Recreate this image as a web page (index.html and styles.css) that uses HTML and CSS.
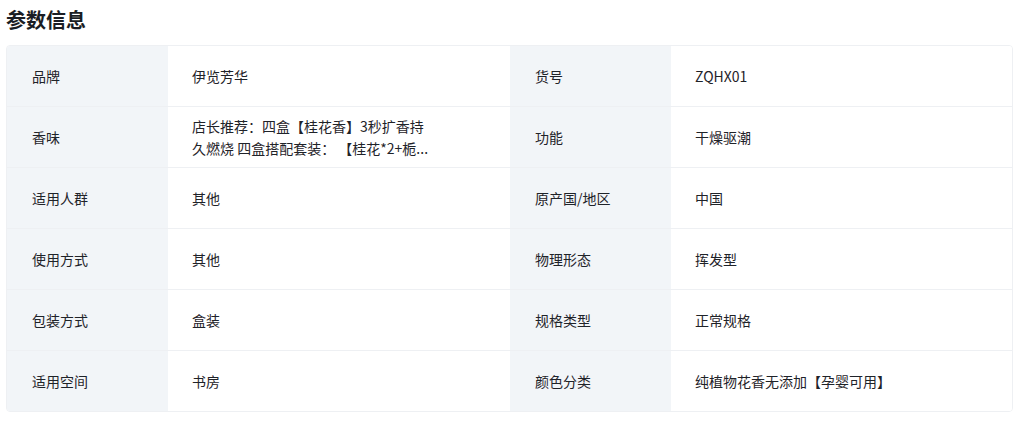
FILE: index.html
```html
<!DOCTYPE html>
<html lang="zh-CN">
<head>
<meta charset="utf-8">
<title>参数信息</title>
<link rel="stylesheet" href="styles.css">
</head>
<body>
<h2 class="title">参数信息</h2>
<div class="params">
  <div class="label">品牌</div><div class="value">伊览芳华</div>
  <div class="label">货号</div><div class="value">ZQHX01</div>

  <div class="label">香味</div><div class="value"><span class="wrap">店长推荐：四盒【桂花香】3秒扩香持久燃烧 四盒搭配套装： 【桂花*2+栀...</span></div>
  <div class="label">功能</div><div class="value">干燥驱潮</div>

  <div class="label">适用人群</div><div class="value">其他</div>
  <div class="label">原产国/地区</div><div class="value">中国</div>

  <div class="label">使用方式</div><div class="value">其他</div>
  <div class="label">物理形态</div><div class="value">挥发型</div>

  <div class="label">包装方式</div><div class="value">盒装</div>
  <div class="label">规格类型</div><div class="value">正常规格</div>

  <div class="label last">适用空间</div><div class="value last">书房</div>
  <div class="label last">颜色分类</div><div class="value last">纯植物花香无添加【孕婴可用】</div>
</div>
</body>
</html>
```
FILE: styles.css
```css
html, body {
  margin: 0;
  background: #ffffff;
}
body {
  padding: 6px 10px 0 6px;
  font-family: "Noto Sans CJK SC", "Noto Sans", sans-serif;
  color: #1f2329;
}
.title {
  margin: 0 0 11px 0;
  font-size: 20px;
  line-height: 28px;
  font-weight: 700;
  color: #1a1d23;
}
.params {
  display: grid;
  grid-template-columns: 161px 342px 161px 1fr;
  border: 1px solid #eef0f3;
  border-radius: 4px;
  overflow: hidden;
}
.label, .value {
  height: 60px;
  display: flex;
  align-items: center;
  font-size: 14px;
  line-height: 22px;
  border-bottom: 1px solid #eef0f3;
  box-sizing: content-box;
}
.label {
  background: #f2f5f8;
  padding-left: 25px;
}
.value {
  background: #ffffff;
  padding-left: 24px;
}
.label.last, .value.last {
  border-bottom: none;
}
.wrap {
  display: block;
  max-width: 240px;
}
```
